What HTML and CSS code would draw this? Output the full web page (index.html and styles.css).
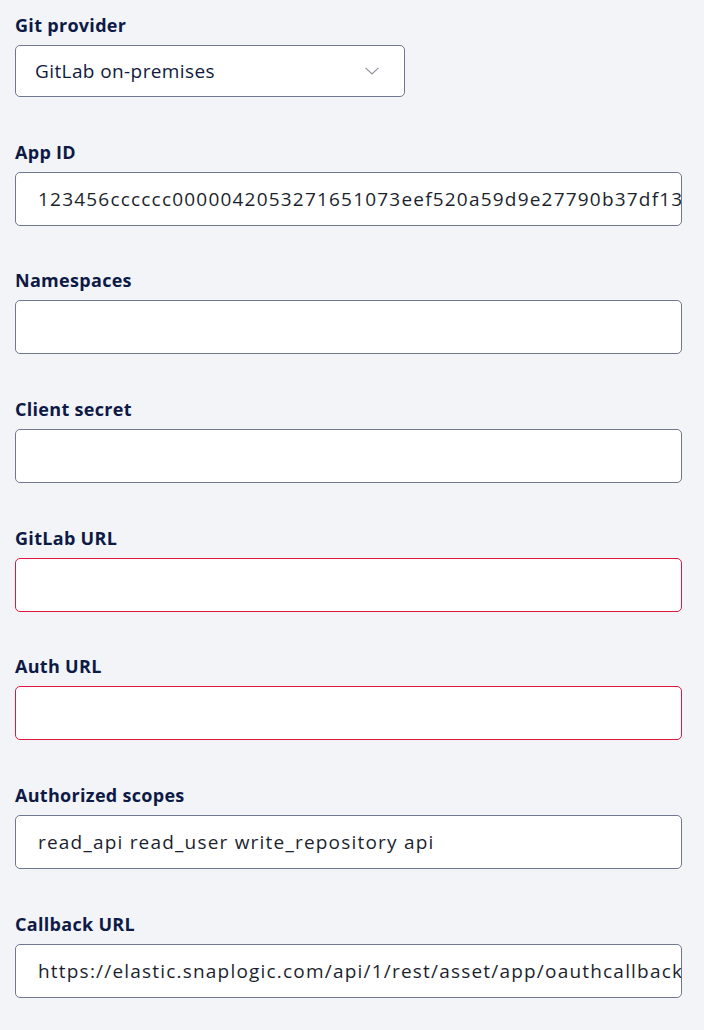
FILE: index.html
```html
<!DOCTYPE html>
<html lang="en">
<head>
<meta charset="utf-8">
<title>Git provider settings</title>
<link rel="stylesheet" href="styles.css">
</head>
<body>
<form class="form">
  <div class="field">
    <div class="label">Git provider</div>
    <div class="select">
      <span class="select-text">GitLab on-premises</span>
      <svg class="chevron" width="14" height="8" viewBox="0 0 14 8"><path d="M0.6 0.8 L7 7 L13.4 0.8" fill="none" stroke="#8a8e9a" stroke-width="1.1"/></svg>
    </div>
  </div>
  <div class="field">
    <div class="label">App ID</div>
    <div class="input"><span class="value">123456cccccc0000042053271651073eef520a59d9e27790b37df13</span></div>
  </div>
  <div class="field">
    <div class="label">Namespaces</div>
    <div class="input"></div>
  </div>
  <div class="field">
    <div class="label">Client secret</div>
    <div class="input"></div>
  </div>
  <div class="field">
    <div class="label">GitLab URL</div>
    <div class="input error"></div>
  </div>
  <div class="field">
    <div class="label">Auth URL</div>
    <div class="input error"></div>
  </div>
  <div class="field">
    <div class="label">Authorized scopes</div>
    <div class="input"><span class="value">read_api read_user write_repository api</span></div>
  </div>
  <div class="field">
    <div class="label">Callback URL</div>
    <div class="input"><span class="value">https://elastic.snaplogic.com/api/1/rest/asset/app/oauthcallback</span></div>
  </div>
</form>
</body>
</html>
```
FILE: styles.css
```css
html, body {
  margin: 0;
  padding: 0;
  background: #f3f4f8;
}
body {
  font-family: "Open Sans", "DejaVu Sans", sans-serif;
  color: #0f1a3d;
}
.form {
  display: flex;
  flex-direction: column;
  padding: 14px 22px 0 15px;
  gap: 43.7px;
}
.field {
  display: flex;
  flex-direction: column;
}
.label {
  font-size: 18px;
  font-weight: 700;
  line-height: 22px;
  letter-spacing: 0.3px;
  color: #0d1a45;
  margin-bottom: 9px;
}
.select {
  width: 390px;
  height: 52px;
  box-sizing: border-box;
  border: 1px solid #6f7791;
  border-radius: 5px;
  background: #fff;
  display: flex;
  align-items: center;
  justify-content: space-between;
  padding: 0 25px 0 19px;
}
.select-text {
  font-size: 19px;
  letter-spacing: 0.4px;
  color: #0f1a3d;
}
.chevron {
  display: block;
}
.input {
  height: 54px;
  box-sizing: border-box;
  border: 1px solid #6f7791;
  border-radius: 5px;
  background: #fff;
  display: flex;
  align-items: center;
  padding-left: 22px;
  overflow: hidden;
  white-space: nowrap;
}
.input.error {
  border-color: #e3163e;
}
.value {
  font-size: 19px;
  letter-spacing: 1.2px;
  color: #1c1f2e;
}
```
